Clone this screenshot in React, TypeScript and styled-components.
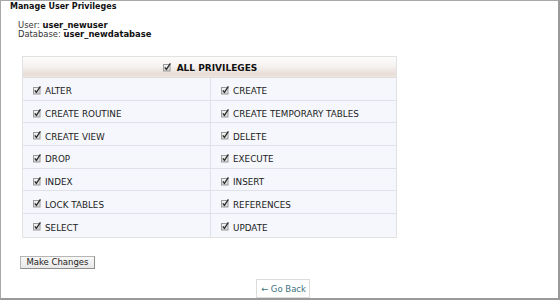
import React from "react";
import styled, { createGlobalStyle } from "styled-components";

const Global = createGlobalStyle`
  html, body { margin: 0; padding: 0; background: #fff; }
  body { font-family: "DejaVu Sans", Verdana, sans-serif; color: #222; }
`;

const Frame = styled.div`
  box-sizing: border-box;
  width: 560px;
  height: 300px;
  border-top: 1px solid #a8a8a8;
  border-left: 1px solid #a8a8a8;
  border-right: 2px solid #9a9a9a;
  border-bottom: 2px solid #9a9a9a;
  overflow: hidden;
  display: flex;
  flex-direction: column;
`;

const Title = styled.div`
  font-size: 8px;
  font-weight: bold;
  line-height: 10px;
  margin: 1px 0 0 9px;
  color: #111;
`;

const Info = styled.div`
  margin: 9px 0 0 17px;
  font-size: 8.4px;
  line-height: 8.5px;
  color: #333;
  b { color: #111; }
`;

const Table = styled.div`
  margin: 18px 0 0 21px;
  width: 375px;
  box-sizing: border-box;
  border: 1px solid #e2e2e2;
  display: grid;
  grid-template-columns: 187px 1fr;
`;

const HeaderCell = styled.div`
  grid-column: 1 / span 2;
  height: 21px;
  display: flex;
  align-items: center;
  justify-content: center;
  gap: 5px;
  background: linear-gradient(#fcfcfc 0%, #f6f3f1 45%, #e9ddd7 85%, #eee6e1 100%);
  border-bottom: 1px solid #e2dede;
  font-size: 9px;
  font-weight: bold;
  color: #111;
  padding: 1px 0 0 0;
  box-sizing: border-box;
`;

const Cell = styled.div<{ $right?: boolean; $last?: boolean }>`
  height: 22.7px;
  box-sizing: border-box;
  display: flex;
  align-items: center;
  gap: 3px;
  padding: 4px 0 0 9px;
  background: #f5f7fc;
  border-bottom: ${(p) => (p.$last ? "none" : "1px solid #dfe2e8")};
  border-left: ${(p) => (p.$right ? "1px solid #dfe2e8" : "none")};
  font-size: 8.8px;
  color: #222;
`;

const Label = styled.span`
  padding-top: 1px;
`;

const Box = styled.svg`
  width: 10px;
  height: 10px;
  flex: none;
  margin-top: -2px;
`;

const Check = () => (
  <Box viewBox="0 0 10 10">
    <defs>
      <linearGradient id="cbg" x1="0" y1="0" x2="0" y2="1">
        <stop offset="0" stopColor="#f6f6f6" />
        <stop offset="1" stopColor="#d4d4d4" />
      </linearGradient>
    </defs>
    <rect x="1.5" y="2.5" width="6.5" height="6.5" fill="url(#cbg)" stroke="#9a9a9a" strokeWidth="1" />
    <path d="M2.8 5.3 L4.4 7.3 L8.4 1.3" fill="none" stroke="#2a2a2a" strokeWidth="1.3" />
  </Box>
);

const Button = styled.button`
  margin: 18px 0 0 19px;
  align-self: flex-start;
  width: 75px;
  height: 17px;
  padding: 0;
  font-family: "DejaVu Sans", Verdana, sans-serif;
  font-size: 8.5px;
  color: #222;
  background: linear-gradient(#f8f8f8, #e8e8e8);
  border: 1px solid #b5b5b5;
  border-right-color: #8e8e8e;
  border-bottom-color: #8e8e8e;
  border-radius: 0;
`;

const BackWrap = styled.div`
  margin: 10px 0 0 255px;
  align-self: flex-start;
  width: 54px;
  height: 24px;
  box-sizing: border-box;
  border: 1px solid #dcdcdc;
  padding: 4px 0 0 4px;
  font-size: 8.5px;
  color: #3d7280;
  white-space: nowrap;
`;

const rows: [string, string][] = [
  ["ALTER", "CREATE"],
  ["CREATE ROUTINE", "CREATE TEMPORARY TABLES"],
  ["CREATE VIEW", "DELETE"],
  ["DROP", "EXECUTE"],
  ["INDEX", "INSERT"],
  ["LOCK TABLES", "REFERENCES"],
  ["SELECT", "UPDATE"],
];

export default function App() {
  return (
    <>
      <Global />
      <Frame>
        <Title>Manage User Privileges</Title>
        <Info>
          User: <b>user_newuser</b>
          <br />
          Database: <b>user_newdatabase</b>
        </Info>
        <Table>
          <HeaderCell>
            <Check />
            <span>ALL PRIVILEGES</span>
          </HeaderCell>
          {rows.map(([a, b], i) => (
            <React.Fragment key={a}>
              <Cell $last={i === rows.length - 1}>
                <Check />
                <Label>{a}</Label>
              </Cell>
              <Cell $right $last={i === rows.length - 1}>
                <Check />
                <Label>{b}</Label>
              </Cell>
            </React.Fragment>
          ))}
        </Table>
        <Button>Make Changes</Button>
        <BackWrap>← Go Back</BackWrap>
      </Frame>
    </>
  );
}
